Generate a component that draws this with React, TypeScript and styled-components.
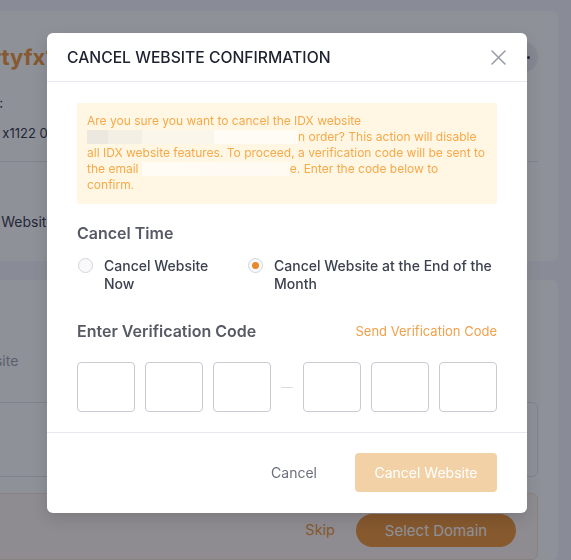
import styled, { createGlobalStyle } from "styled-components";

const GlobalStyle = createGlobalStyle`
  html, body {
    margin: 0;
    padding: 0;
    height: 100%;
    overflow: hidden;
  }
  body {
    font-family: Inter, "Noto Sans", "Liberation Sans", sans-serif;
  }
  * {
    box-sizing: border-box;
  }
`;

// page behind the dialog
const Page = styled.main`
  height: 560px;
  padding: 11px 13px 0 0;
  background: #f5f5f9;
  display: flex;
  flex-direction: column;
  gap: 19px;
  overflow: hidden;
`;

const Card = styled.section<{ $height?: number; $top: number }>`
  margin-left: -100px;
  padding: ${(p) => p.$top}px 20px 0 29px;
  background: #ffffff;
  border-radius: 6px;
  display: flex;
  flex-direction: column;
  flex-shrink: 0;
  ${(p) => (p.$height ? `height: ${p.$height}px;` : "flex: 1;")}
`;

const TitleRow = styled.div`
  display: flex;
  align-items: center;
  justify-content: space-between;
`;

const SiteTitle = styled.h2`
  margin: 0;
  font-size: 22px;
  line-height: 30px;
  font-weight: 700;
  color: #ee993e;
`;

const MoreButton = styled.div`
  width: 32px;
  height: 32px;
  border-radius: 50%;
  background: #eeeff3;
  display: flex;
  align-items: center;
  justify-content: center;
  gap: 3px;

  & > span {
    width: 3px;
    height: 3px;
    border-radius: 50%;
    background: #3c4050;
  }
`;

const InfoText = styled.div<{ $gap: number; $muted?: boolean; $size?: number }>`
  margin-top: ${(p) => p.$gap}px;
  font-size: ${(p) => p.$size ?? 14}px;
  line-height: 20px;
  color: ${(p) => (p.$muted ? "#a3a6b0" : "#3c4050")};
`;

const Divider = styled.hr`
  margin: 18px 0 0;
  border: none;
  border-top: 1px solid #e6e7ec;
`;

const OptionBox = styled.div`
  margin-top: 31px;
  height: 75px;
  border: 1px solid #e3e4ea;
  border-radius: 6px;
`;

const ActionBox = styled.div`
  margin-top: 16px;
  flex: 1;
  padding: 20px 21px 0 0;
  background: #fdf6ee;
  border: 1px solid #f3e6d6;
  border-radius: 6px;
  display: flex;
  justify-content: flex-end;
  align-items: flex-start;
  gap: 21px;
`;

const SkipLink = styled.span`
  font-size: 14.5px;
  line-height: 32px;
  color: #ee993e;
`;

const PillButton = styled.button`
  width: 160px;
  height: 33px;
  border: none;
  border-radius: 17px;
  background: #ee993e;
  color: #ffffff;
  font-family: inherit;
  font-size: 15px;
`;

// dialog
const Overlay = styled.div`
  position: fixed;
  inset: 0;
  background: rgba(7, 11, 29, 0.45);
  display: flex;
  justify-content: center;
  align-items: flex-start;
  padding: 33px 0 0 3px;
`;

const Modal = styled.div`
  width: 480px;
  background: #ffffff;
  border-radius: 6px;
  box-shadow: 0 6px 16px rgba(0, 0, 0, 0.12);
`;

const ModalHeader = styled.header`
  height: 49px;
  padding: 0 21px 0 20px;
  border-bottom: 1px solid #e8e9ef;
  display: flex;
  align-items: center;
  justify-content: space-between;
`;

const ModalTitle = styled.h1`
  margin: 0;
  font-size: 15.7px;
  font-weight: 500;
  color: #1d2130;
`;

const CloseButton = styled.button`
  padding: 0;
  border: none;
  background: none;
  display: flex;
`;

const ModalBody = styled.div`
  padding: 21px 30px 20px;
`;

const Notice = styled.p`
  margin: 0;
  padding: 10px 10px 11px;
  background: #fff7e4;
  border-radius: 2px;
  font-size: 12px;
  line-height: 16px;
  color: #f6a94a;
`;

const Redacted = styled.span<{ $w: number; $grey?: boolean }>`
  display: inline-block;
  width: ${(p) => p.$w}px;
  height: 14px;
  vertical-align: -3px;
  background: ${(p) =>
    p.$grey
      ? "linear-gradient(90deg, #ece8df 0 10%, #f4efe4 10% 26%, #faf6ec 26% 60%, #fffcf5 60% 100%)"
      : "linear-gradient(90deg, #fffcf6, #fffaf2)"};
`;

const SectionHead = styled.div<{ $gap: number }>`
  margin-top: ${(p) => p.$gap}px;
  display: flex;
  align-items: center;
  justify-content: space-between;
`;

const SectionTitle = styled.h3`
  margin: 0;
  font-size: 16px;
  line-height: 22px;
  font-weight: 600;
  color: #575a65;
`;

const TextLink = styled.span`
  font-size: 13px;
  color: #f0a04b;
`;

const RadioGroup = styled.div`
  margin-top: 13px;
  display: grid;
  grid-template-columns: 150px 1fr;
  column-gap: 20px;
`;

const RadioOption = styled.label`
  display: flex;
  align-items: flex-start;
  gap: 11px;
  padding-left: 1px;
  font-size: 14px;
  line-height: 18px;
  font-weight: 500;
  color: #3c4150;
`;

const RadioMark = styled.span<{ $checked?: boolean }>`
  flex-shrink: 0;
  width: 15px;
  height: 15px;
  margin-top: 1px;
  border: 1px solid #d3d5dc;
  border-radius: 50%;
  background: #f9f9fb;
  display: flex;
  align-items: center;
  justify-content: center;

  &::after {
    content: "";
    width: 7px;
    height: 7px;
    border-radius: 50%;
    background: ${(p) => (p.$checked ? "#e8872b" : "transparent")};
  }
`;

const CodeRow = styled.div`
  margin-top: 20px;
  display: flex;
  align-items: center;
  gap: 10px;
`;

const CodeBox = styled.div`
  width: 58px;
  height: 50px;
  border: 1px solid #c9cbd3;
  border-radius: 4px;
`;

const CodeDash = styled.span`
  width: 12px;
  height: 1px;
  background: #dcdde3;
`;

const ModalFooter = styled.footer`
  padding: 20px 30px 21px;
  border-top: 1px solid #e8e9ef;
  display: flex;
  justify-content: flex-end;
  align-items: center;
  gap: 18px;
`;

const GhostButton = styled.button`
  padding: 0 20px;
  border: none;
  background: none;
  font-family: inherit;
  font-size: 14px;
  color: #6b6f7b;
`;

const PrimaryButton = styled.button`
  width: 142px;
  height: 39px;
  border: none;
  border-radius: 4px;
  background: #f3d1a6;
  color: #ffffff;
  font-family: inherit;
  font-size: 14px;
`;

const App = () => {
  const codes = [0, 1, 2];
  return (
    <>
      <GlobalStyle />
      <Page>
        <Card $height={250} $top={30}>
          <TitleRow>
            <SiteTitle>Propertyfx1122</SiteTitle>
            <MoreButton>
              <span />
              <span />
              <span />
            </MoreButton>
          </TitleRow>
          <InfoText $gap={21} $size={13.5}>
            Account ID:
          </InfoText>
          <InfoText $gap={9} $size={13}>
            Website ID: x1122 01/15/2024
          </InfoText>
          <Divider />
          <InfoText $gap={50}>Active IDX Website</InfoText>
        </Card>
        <Card $top={71}>
          <InfoText $gap={0} $muted>
            Main Website
          </InfoText>
          <OptionBox />
          <ActionBox>
            <SkipLink>Skip</SkipLink>
            <PillButton>Select Domain</PillButton>
          </ActionBox>
        </Card>
      </Page>

      <Overlay>
        <Modal>
          <ModalHeader>
            <ModalTitle>CANCEL WEBSITE CONFIRMATION</ModalTitle>
            <CloseButton aria-label="close">
              <svg width="15" height="15" viewBox="0 0 15 15">
                <path
                  d="M1 1 L14 14 M14 1 L1 14"
                  stroke="#9b9da7"
                  strokeWidth="1.6"
                  strokeLinecap="round"
                />
              </svg>
            </CloseButton>
          </ModalHeader>

          <ModalBody>
            <Notice>
              Are you sure you want to cancel the IDX website <Redacted $w={211} $grey />n
              order? This action will disable all IDX website features. To proceed, a
              verification code will be sent to the email <Redacted $w={148} />e. Enter the
              code below to confirm.
            </Notice>

            <SectionHead $gap={18}>
              <SectionTitle>Cancel Time</SectionTitle>
            </SectionHead>
            <RadioGroup>
              <RadioOption>
                <RadioMark />
                Cancel Website Now
              </RadioOption>
              <RadioOption>
                <RadioMark $checked />
                Cancel Website at the End of the Month
              </RadioOption>
            </RadioGroup>

            <SectionHead $gap={27}>
              <SectionTitle>Enter Verification Code</SectionTitle>
              <TextLink>Send Verification Code</TextLink>
            </SectionHead>
            <CodeRow>
              {codes.map((c) => (
                <CodeBox key={`a${c}`} />
              ))}
              <CodeDash />
              {codes.map((c) => (
                <CodeBox key={`b${c}`} />
              ))}
            </CodeRow>
          </ModalBody>

          <ModalFooter>
            <GhostButton>Cancel</GhostButton>
            <PrimaryButton>Cancel Website</PrimaryButton>
          </ModalFooter>
        </Modal>
      </Overlay>
    </>
  );
};

export default App;
